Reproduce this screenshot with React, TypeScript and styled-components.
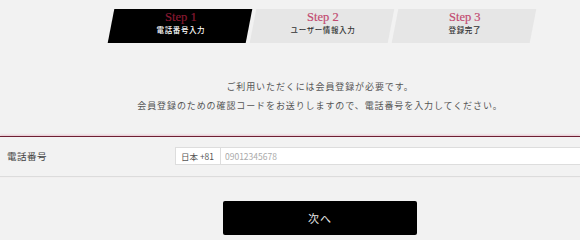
import styled, { createGlobalStyle } from "styled-components"

const GlobalStyle = createGlobalStyle`
  html, body {
    margin: 0;
    padding: 0;
    background: #f2f2f2;
  }
  body {
    font-family: "Noto Sans CJK JP", "Noto Sans", sans-serif;
    color: #333;
    overflow: hidden;
  }
`

const Page = styled.div`
  width: 100%;
  min-height: 239px;
  padding-top: 9px;
  box-sizing: border-box;
  background: #f2f2f2;
  overflow: hidden;
`

// the original page is a little wider than the frame, so its centre sits at 320px
const Column = styled.div`
  margin-left: 60px;
  width: 520px;
`

const StepBar = styled.ol`
  display: flex;
  justify-content: center;
  gap: 4px;
  margin: 0;
  padding: 0 0 0 4px;
  list-style: none;
`

const Step = styled.li<{ $active?: boolean }>`
  width: 138px;
  height: 34px;
  box-sizing: border-box;
  padding-top: 2px;
  display: flex;
  flex-direction: column;
  align-items: center;
  background: ${(p) => (p.$active ? "#000" : "#e6e6e6")};
  transform: skewX(-11deg);
`

const StepInner = styled.div`
  transform: skewX(11deg);
  display: flex;
  flex-direction: column;
  align-items: center;
`

const StepTitle = styled.span<{ $active?: boolean }>`
  font-family: "Liberation Serif", "DejaVu Serif", serif;
  font-size: 12.5px;
  line-height: 13px;
  color: ${(p) => (p.$active ? "#8a1a33" : "#c24a70")};
  -webkit-text-stroke: 0.2px currentColor;
`

const StepLabel = styled.span<{ $active?: boolean }>`
  margin-top: 1px;
  font-size: 7.5px;
  line-height: 10px;
  letter-spacing: 0.6px;
  font-weight: 500;
  color: ${(p) => (p.$active ? "#fff" : "#333")};
`

const Message = styled.div`
  margin-top: 34px;
  text-align: center;
  font-size: 9px;
  line-height: 19px;
  letter-spacing: 0.9px;
  color: #555;

  p {
    margin: 0;
    white-space: nowrap;
  }
`

const FormRow = styled.div`
  margin-top: 21px;
  display: grid;
  grid-template-columns: 175px 1fr;
  align-items: center;
  padding: 10px 0 11px;
  border-top: 1px solid #6e1f33;
  border-bottom: 1px solid #dcdcdc;
  box-shadow: 0 -1px 2px rgba(200, 60, 100, 0.25);
`

const FieldLabel = styled.label`
  padding-left: 7px;
  font-size: 9.5px;
  color: #444;
  letter-spacing: 0.5px;
`

const InputGroup = styled.div`
  display: flex;
  height: 18px;
`

const Prefix = styled.span`
  display: flex;
  align-items: center;
  padding: 0 5px;
  width: 46px;
  box-sizing: border-box;
  background: #fff;
  border: 1px solid #dddddd;
  font-size: 8.5px;
  color: #555;
  white-space: nowrap;
`

const PhoneInput = styled.input`
  flex: 1;
  min-width: 0;
  height: 18px;
  box-sizing: border-box;
  margin: 0;
  padding: 0 4px;
  border: 1px solid #dddddd;
  border-left: none;
  border-right: none;
  background: #fff;
  font-family: inherit;
  font-size: 8.5px;
  color: #333;
  outline: none;

  &::placeholder {
    color: #aaa;
  }
`

const NextButton = styled.button`
  display: block;
  margin: 24px auto 0;
  width: 194px;
  height: 34px;
  border: none;
  border-radius: 2px;
  background: #000;
  color: #e8e8e8;
  font-family: inherit;
  font-size: 11px;
  letter-spacing: 1px;
  cursor: pointer;
`

const steps = [
  { title: "Step 1", label: "電話番号入力" },
  { title: "Step 2", label: "ユーザー情報入力" },
  { title: "Step 3", label: "登録完了" },
]

export default function App() {
  return (
    <>
      <GlobalStyle />
      <Page>
        <Column>
          <StepBar>
            {steps.map((s, i) => (
              <Step key={s.title} $active={i === 0}>
                <StepInner>
                  <StepTitle $active={i === 0}>{s.title}</StepTitle>
                  <StepLabel $active={i === 0}>{s.label}</StepLabel>
                </StepInner>
              </Step>
            ))}
          </StepBar>

          <Message>
            <p>ご利用いただくには会員登録が必要です。</p>
            <p>会員登録のための確認コードをお送りしますので、電話番号を入力してください。</p>
          </Message>
        </Column>

        <FormRow>
          <FieldLabel htmlFor="tel">電話番号</FieldLabel>
          <InputGroup>
            <Prefix>日本 +81</Prefix>
            <PhoneInput id="tel" type="tel" placeholder="09012345678" />
          </InputGroup>
        </FormRow>

        <Column>
          <NextButton type="button">次へ</NextButton>
        </Column>
      </Page>
    </>
  )
}
